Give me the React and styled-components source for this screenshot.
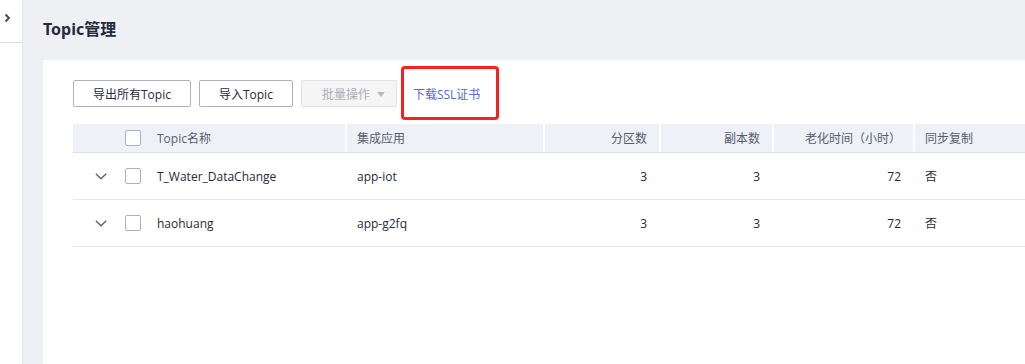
import React from "react";
import styled, { createGlobalStyle } from "styled-components";

const Global = createGlobalStyle`
  html, body { margin: 0; padding: 0; overflow: hidden; }
  body { font-family: "Open Sans", "Noto Sans CJK SC", sans-serif; font-size: 12px; color: #252b3a; }
`;

const Layout = styled.div`
  display: flex;
  height: 364px;
  width: 1025px;
  overflow: hidden;
`;

const Sidebar = styled.aside`
  width: 22px;
  flex: none;
  background: #fff;
  border-right: 1px solid #e3e4e9;
  display: flex;
  flex-direction: column;
`;

const SideToggle = styled.div`
  height: 43px;
  border-bottom: 1px solid #dcdde2;
  display: flex;
  justify-content: center;
  padding-top: 13px;
  box-sizing: border-box;
  padding-right: 7px;
`;

const Main = styled.main`
  flex: 1;
  min-width: 0;
  background: #eef0f4;
  padding-left: 20px;
  display: flex;
  flex-direction: column;
`;

const TitleBar = styled.div`
  height: 60px;
  display: flex;
  align-items: center;
  padding-bottom: 4px;
  box-sizing: border-box;
`;

const Title = styled.h1`
  margin: 0;
  font-size: 16px;
  font-weight: 700;
  color: #252b3a;
  font-family: "Noto Sans", "Noto Sans CJK SC", sans-serif;
`;

const Panel = styled.section`
  flex: 1;
  background: #fff;
  padding: 20px 0 0 30px;
  overflow: hidden;
`;

const Toolbar = styled.div`
  display: flex;
  align-items: center;
  height: 27px;
  gap: 8px;
  margin-bottom: 17px;
`;

const Button = styled.button`
  height: 27px;
  box-sizing: border-box;
  padding: ${(p) => (p.disabled ? "0 11px 0 20px" : "0 19px")};
  border: 1px solid ${(p) => (p.disabled ? "#dfe1e6" : "#adb0b8")};
  background: ${(p) => (p.disabled ? "#f5f5f6" : "#fff")};
  color: ${(p) => (p.disabled ? "#adb0b8" : "#252b3a")};
  border-radius: 2px;
  font-family: inherit;
  font-size: 12px;
  display: inline-flex;
  align-items: center;
  gap: 7px;
  cursor: pointer;
`;

const Caret = styled.span`
  width: 0;
  height: 0;
  border-left: 4px solid transparent;
  border-right: 4px solid transparent;
  border-top: 5px solid #b8bac2;
  margin-top: 2px;
`;

const LinkWrap = styled.span`
  position: relative;
  display: inline-flex;
  align-items: center;
  height: 27px;
  margin-left: -4px;
  padding: 0 19px 0 12px;
`;

const Link = styled.a`
  color: #526ecc;
  font-size: 12px;
  text-decoration: none;
`;

const Highlight = styled.span`
  position: absolute;
  left: 0;
  right: 0;
  top: -14px;
  bottom: -13px;
  border: 3px solid #f5231d;
  border-radius: 4px;
  pointer-events: none;
`;

const Table = styled.div`
  width: 1000px;
`;

const cols = "45px 27px 200px 198px 116px 113px 141px 160px";

const HeadRow = styled.div`
  display: grid;
  grid-template-columns: ${cols};
  height: 28px;
  background: #eef1f8;
  border-bottom: 1px solid #dfe1e6;
  color: #575d6c;
  align-items: stretch;
`;

const Row = styled.div`
  display: grid;
  grid-template-columns: ${cols};
  height: 46px;
  border-bottom: 1px solid #e5e6ea;
  align-items: stretch;
`;

const Cell = styled.div`
  display: flex;
  align-items: center;
  justify-content: ${(p) => (p.$right ? "flex-end" : "flex-start")};
  padding: ${(p) => (p.$right ? "0 12px 0 0" : p.$divider ? "0 10px" : "0 12px")};
  border-left: ${(p) => (p.$divider ? "2px solid #fff" : "none")};
  white-space: nowrap;
  overflow: hidden;
`;

const IconCell = styled.div`
  display: flex;
  align-items: center;
  padding-left: ${(p) => p.$indent}px;
`;

const Check = styled.span`
  width: 16px;
  height: 16px;
  box-sizing: border-box;
  border: 1px solid #adb0b8;
  border-radius: 2px;
  background: #fff;
`;

const Chevron = ({ dir }) =>
  dir === "right" ? (
    <svg width="7" height="10" viewBox="0 0 7 10">
      <polyline points="1.5,1.5 5,5 1.5,8.5" fill="none" stroke="#4a4f5c" strokeWidth="2" />
    </svg>
  ) : (
    <svg width="12" height="7" viewBox="0 0 12 7">
      <polyline points="0.8,0.8 6,5.8 11.2,0.8" fill="none" stroke="#575d6c" strokeWidth="1.2" />
    </svg>
  );

const rows = [
  { name: "T_Water_DataChange", app: "app-iot", part: 3, rep: 3, age: 72, sync: "否" },
  { name: "haohuang", app: "app-g2fq", part: 3, rep: 3, age: 72, sync: "否" },
];

export default function App() {
  return (
    <>
      <Global />
      <Layout>
        <Sidebar>
          <SideToggle>
            <Chevron dir="right" />
          </SideToggle>
        </Sidebar>
        <Main>
          <TitleBar>
            <Title>Topic管理</Title>
          </TitleBar>
          <Panel>
            <Toolbar>
              <Button>导出所有Topic</Button>
              <Button>导入Topic</Button>
              <Button disabled>
                批量操作 <Caret />
              </Button>
              <LinkWrap>
                <Link href="#">下载SSL证书</Link>
                <Highlight />
              </LinkWrap>
            </Toolbar>
            <Table>
              <HeadRow>
                <IconCell $indent={0} />
                <IconCell $indent={7}>
                  <Check />
                </IconCell>
                <Cell>Topic名称</Cell>
                <Cell $divider>集成应用</Cell>
                <Cell $divider $right>分区数</Cell>
                <Cell $divider $right>副本数</Cell>
                <Cell $divider $right>老化时间（小时）</Cell>
                <Cell $divider>同步复制</Cell>
              </HeadRow>
              {rows.map((r) => (
                <Row key={r.name}>
                  <IconCell $indent={22}>
                    <Chevron dir="down" />
                  </IconCell>
                  <IconCell $indent={7}>
                    <Check />
                  </IconCell>
                  <Cell>{r.name}</Cell>
                  <Cell $divider>{r.app}</Cell>
                  <Cell $divider $right>{r.part}</Cell>
                  <Cell $divider $right>{r.rep}</Cell>
                  <Cell $divider $right>{r.age}</Cell>
                  <Cell $divider>{r.sync}</Cell>
                </Row>
              ))}
            </Table>
          </Panel>
        </Main>
      </Layout>
    </>
  );
}
